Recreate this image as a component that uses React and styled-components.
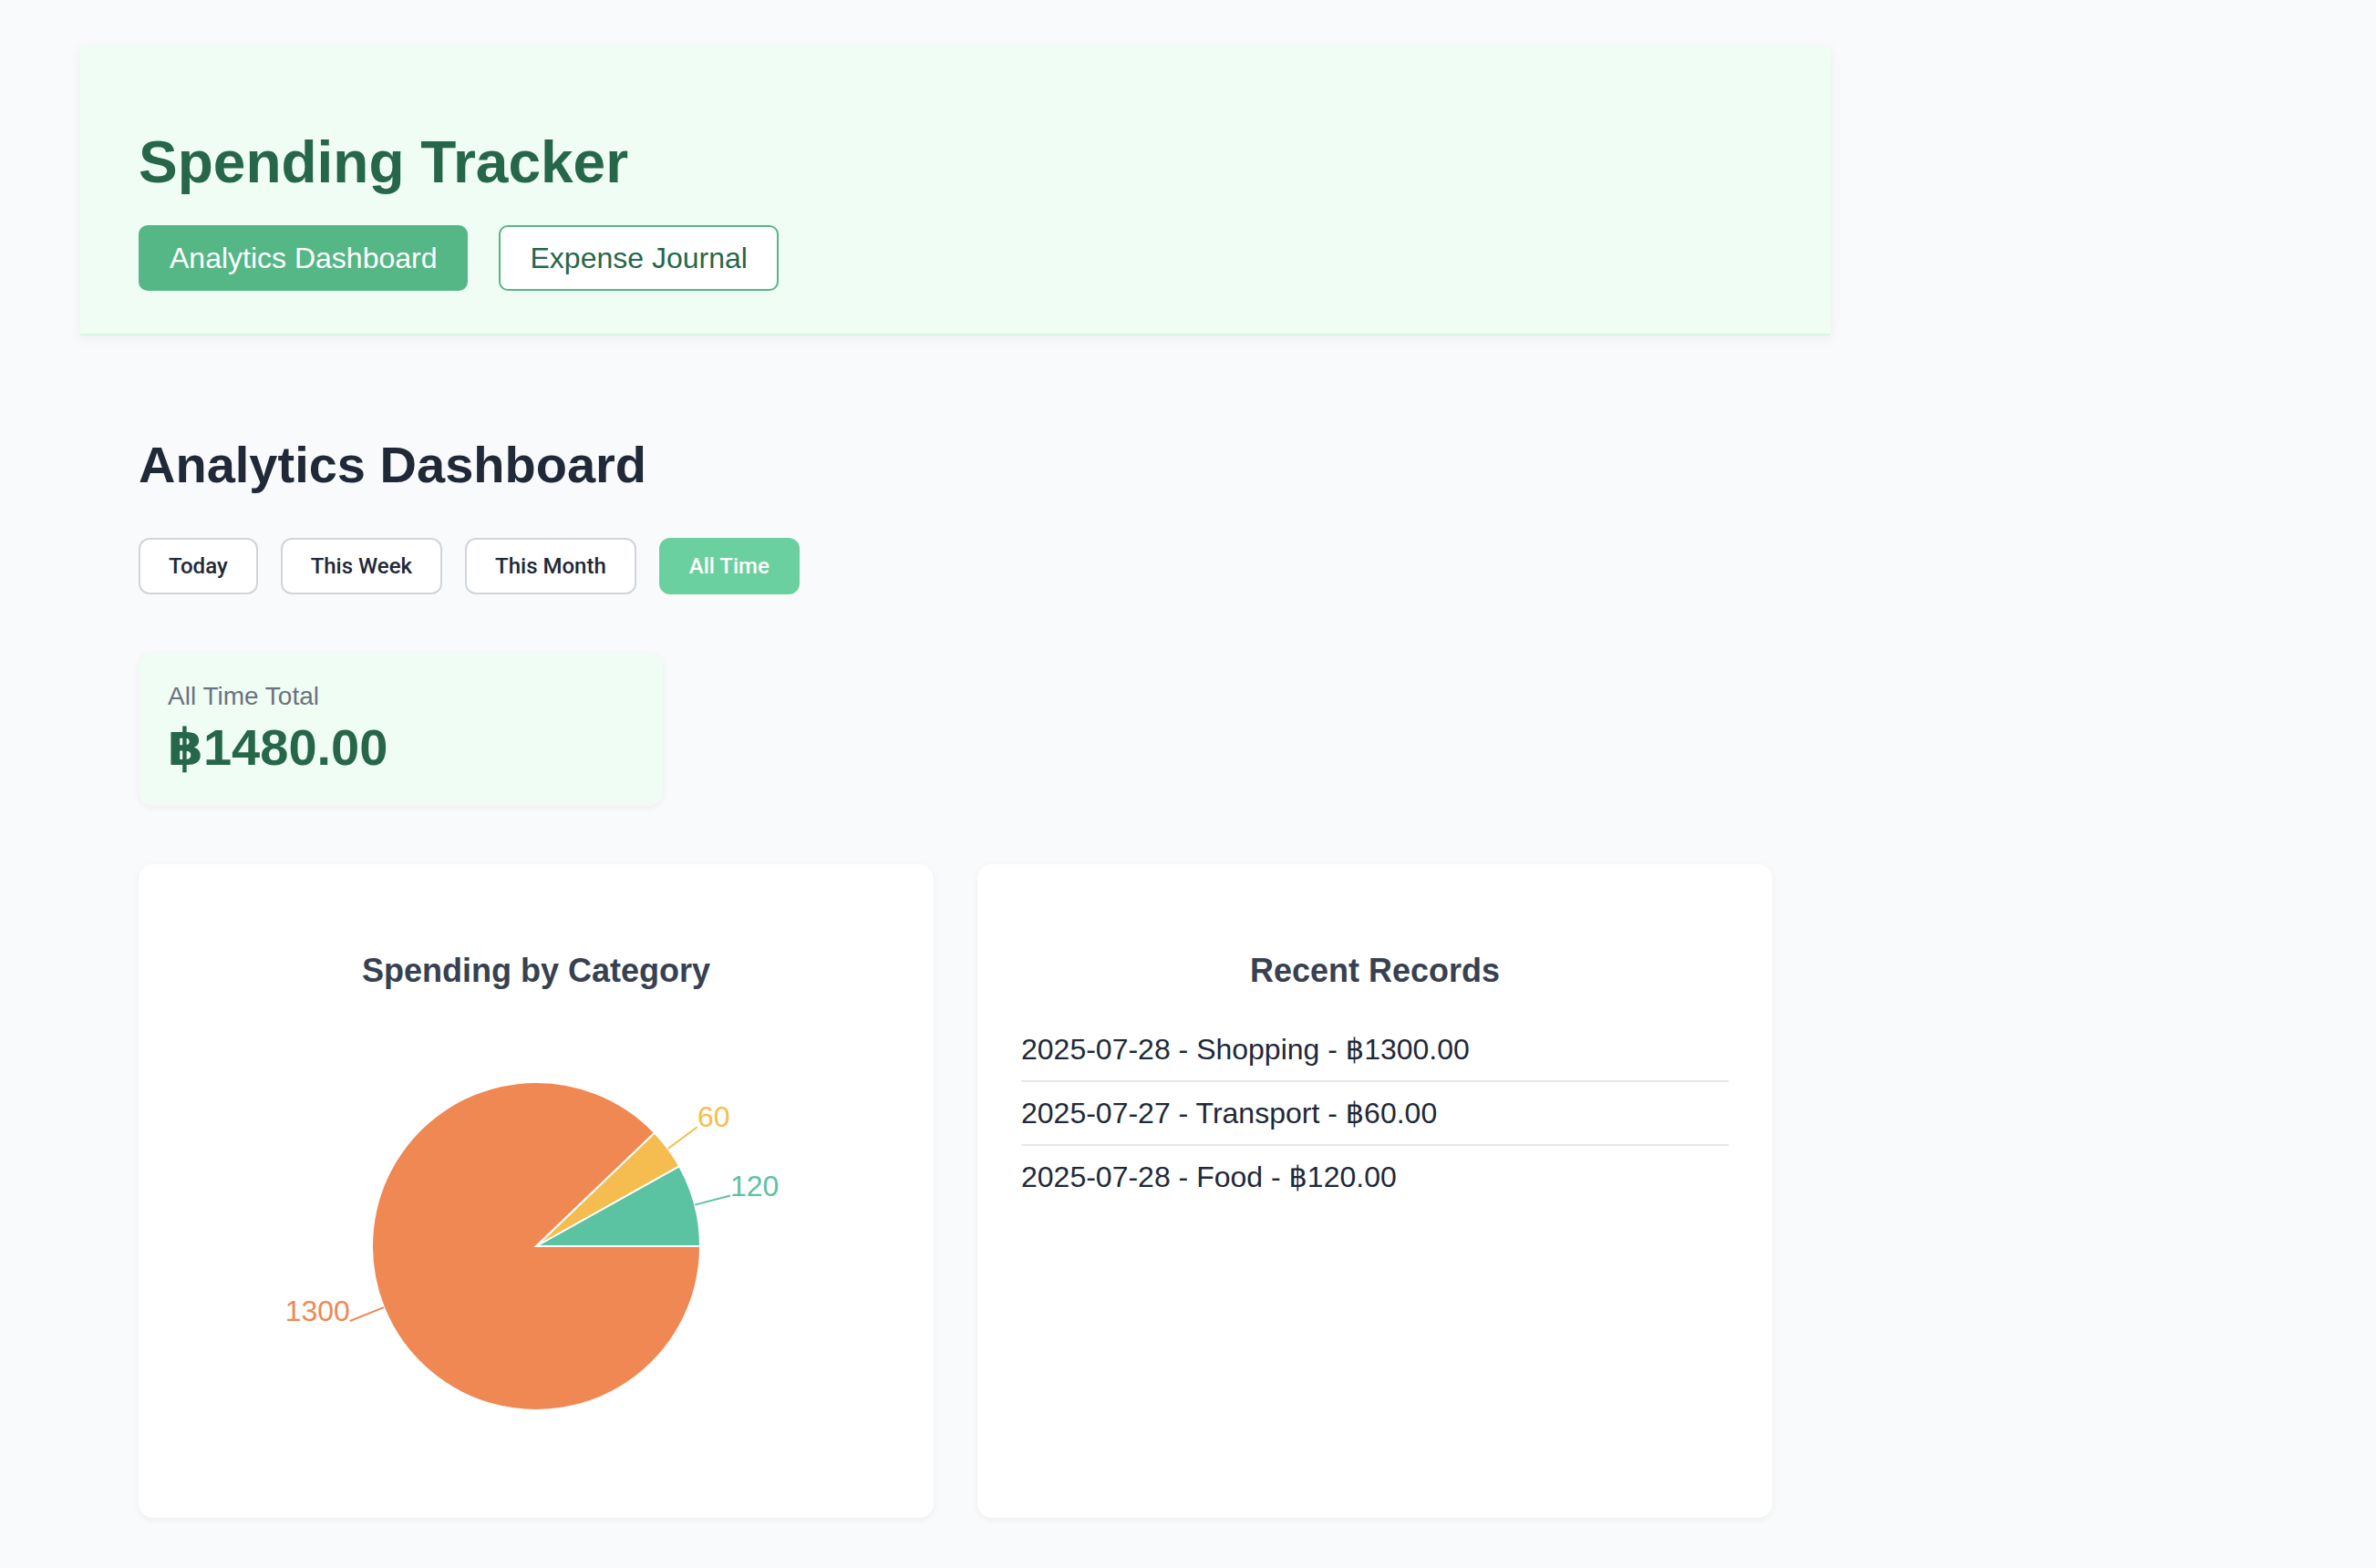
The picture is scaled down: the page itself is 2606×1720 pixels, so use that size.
import React from "react";
import styled, { createGlobalStyle } from "styled-components";

const records = [
  { date: "2025-07-28", category: "Shopping", amount: 1300 },
  { date: "2025-07-27", category: "Transport", amount: 60 },
  { date: "2025-07-28", category: "Food", amount: 120 },
];

const slices = [
  { name: "Food", value: 120, color: "#5bc2a2" },
  { name: "Transport", value: 60, color: "#f5bd4f" },
  { name: "Shopping", value: 1300, color: "#ef8852" },
];

const filters = ["Today", "This Week", "This Month", "All Time"];

const GlobalStyle = createGlobalStyle`
  body {
    margin: 0;
    background: #f9fafb;
    font-family: "Liberation Sans", "DejaVu Sans", Arial, sans-serif;
  }
`;

const Page = styled.div`
  width: 1920px;
  padding: 50px 0 60px 88px;
`;

const Header = styled.header`
  background: #f0fdf4;
  border-bottom: 2px solid #d8f5e1;
  box-shadow: 0 4px 14px rgba(0, 0, 0, 0.05);
  padding: 92px 64px 47px;
`;

const Title = styled.h1`
  margin: 0 0 32px;
  font-size: 64px;
  line-height: 73px;
  font-weight: 700;
  color: #276749;
`;

const Nav = styled.nav`
  display: flex;
  gap: 34px;
`;

const NavButton = styled.button`
  font-family: "Liberation Sans", Arial, sans-serif;
  font-size: 32px;
  line-height: 36px;
  padding: 16px 32px;
  border-radius: 10px;
  border: 2px solid #55b786;
  background: ${(p) => (p.active ? "#55b786" : "#ffffff")};
  color: ${(p) => (p.active ? "#ffffff" : "#276749")};
`;

const Main = styled.main`
  padding: 0 64px;
`;

const Heading = styled.h2`
  margin: 110px 0 48px;
  font-size: 56px;
  line-height: 64px;
  font-weight: 700;
  color: #1f2937;
`;

const Filters = styled.div`
  display: flex;
  gap: 25px;
`;

const FilterButton = styled.button`
  font-family: Roboto, Inter, "Liberation Sans", sans-serif;
  font-size: 24px;
  line-height: 30px;
  font-weight: 500;
  padding: 14px 31px;
  border-radius: 12px;
  border: 2px solid ${(p) => (p.active ? "#6bd09f" : "#d1d5db")};
  background: ${(p) => (p.active ? "#6bd09f" : "#ffffff")};
  color: ${(p) => (p.active ? "#ffffff" : "#1f2937")};
`;

const TotalCard = styled.div`
  width: 511px;
  margin-top: 64px;
  padding: 32px;
  background: #f0fdf4;
  border-radius: 16px;
  box-shadow: 0 2px 8px rgba(0, 0, 0, 0.05);
`;

const TotalLabel = styled.div`
  font-size: 28px;
  line-height: 32px;
  color: #6b7280;
  margin-bottom: 8px;
`;

const TotalValue = styled.div`
  font-size: 56px;
  line-height: 64px;
  font-weight: 700;
  color: #276749;
`;

const Grid = styled.div`
  display: grid;
  grid-template-columns: 1fr 1fr;
  gap: 48px;
  margin-top: 64px;
`;

const Card = styled.section`
  background: #ffffff;
  border-radius: 16px;
  padding: 48px;
  box-shadow: 0 2px 8px rgba(0, 0, 0, 0.05);
`;

const CardTitle = styled.h3`
  margin: 48px 0 32px;
  font-size: 36px;
  line-height: 41px;
  font-weight: 700;
  text-align: center;
  color: #374151;
`;

const ChartBox = styled.div`
  height: 500px;
`;

const RecordList = styled.ul`
  list-style: none;
  margin: 0;
  padding: 0;
`;

const RecordItem = styled.li`
  padding: 16px 0;
  font-size: 32px;
  line-height: 36px;
  color: #1f2937;
  border-bottom: 2px solid #e5e7eb;
  &:last-child {
    border-bottom: none;
  }
`;

const point = (cx, cy, r, deg) => {
  const a = (deg * Math.PI) / 180;
  return [cx + r * Math.cos(a), cy - r * Math.sin(a)];
};

const PieChart = ({ width, height, radius }) => {
  const cx = width / 2;
  const cy = height / 2;
  const total = slices.reduce((s, d) => s + d.value, 0);
  let start = 0;
  return (
    <svg width={width} height={height}>
      {slices.map((d) => {
        const sweep = (d.value / total) * 360;
        const end = start + sweep;
        const mid = start + sweep / 2;
        const [x1, y1] = point(cx, cy, radius, start);
        const [x2, y2] = point(cx, cy, radius, end);
        const [lx1, ly1] = point(cx, cy, radius, mid);
        const [lx2, ly2] = point(cx, cy, radius + 40, mid);
        const right = Math.cos((mid * Math.PI) / 180) >= 0;
        const large = sweep > 180 ? 1 : 0;
        start = end;
        return (
          <g key={d.name}>
            <path
              d={`M${cx},${cy} L${x1},${y1} A${radius},${radius} 0 ${large} 0 ${x2},${y2} Z`}
              fill={d.color}
              stroke="#fff"
              strokeWidth="2"
            />
            <polyline
              points={`${lx1},${ly1} ${lx2},${ly2}`}
              fill="none"
              stroke={d.color}
              strokeWidth="2"
            />
            <text
              x={lx2}
              y={ly2}
              fill={d.color}
              fontSize="32"
              fontFamily="Liberation Sans, Arial, sans-serif"
              textAnchor={right ? "start" : "end"}
            >
              {d.value}
            </text>
          </g>
        );
      })}
    </svg>
  );
};

const App = () => {
  const total = records.reduce((s, r) => s + r.amount, 0);

  return (
    <Page>
      <GlobalStyle />
      <Header>
        <Title>Spending Tracker</Title>
        <Nav>
          <NavButton active>Analytics Dashboard</NavButton>
          <NavButton>Expense Journal</NavButton>
        </Nav>
      </Header>
      <Main>
        <Heading>Analytics Dashboard</Heading>
        <Filters>
          {filters.map((f) => (
            <FilterButton key={f} active={f === "All Time"}>
              {f}
            </FilterButton>
          ))}
        </Filters>
        <TotalCard>
          <TotalLabel>All Time Total</TotalLabel>
          <TotalValue>฿{total.toFixed(2)}</TotalValue>
        </TotalCard>
        <Grid>
          <Card>
            <CardTitle>Spending by Category</CardTitle>
            <ChartBox>
              <PieChart width={776} height={500} radius={180} />
            </ChartBox>
          </Card>
          <Card>
            <CardTitle>Recent Records</CardTitle>
            <RecordList>
              {records.map((r, i) => (
                <RecordItem key={i}>
                  {r.date} - {r.category} - ฿{r.amount.toFixed(2)}
                </RecordItem>
              ))}
            </RecordList>
          </Card>
        </Grid>
      </Main>
    </Page>
  );
};

export default App;
